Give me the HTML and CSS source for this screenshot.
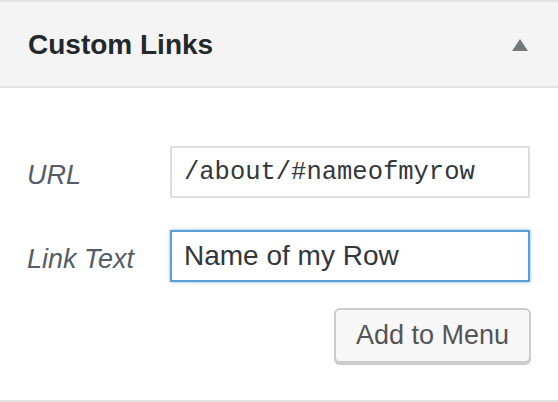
FILE: index.html
```html
<!DOCTYPE html>
<html>
<head>
<meta charset="utf-8">
<link rel="stylesheet" href="styles.css">
</head>
<body>
<div class="panel">
  <div class="panel-head">
    <h3 class="panel-title">Custom Links</h3>
    <svg class="toggle" width="16" height="12" viewBox="0 0 16 12"><polygon points="8,0 16,12 0,12" fill="#72777c"/></svg>
  </div>
  <div class="panel-body">
    <div class="field">
      <label class="field-label">URL</label>
      <div class="input input-url">/about/#nameofmyrow</div>
    </div>
    <div class="field">
      <label class="field-label">Link Text</label>
      <div class="input input-focus">Name of my Row</div>
    </div>
    <div class="actions">
      <button class="button">Add to Menu</button>
    </div>
  </div>
</div>
</body>
</html>
```

FILE: styles.css
```css
html, body {
  margin: 0;
  padding: 0;
  background: #fff;
}

.panel {
  width: 558px;
  height: 402px;
  box-sizing: border-box;
  border-top: 2px solid #e2e2e2;
  border-bottom: 2px solid #e2e2e2;
  font-family: "Liberation Sans", Arial, sans-serif;
  display: flex;
  flex-direction: column;
}

.panel-head {
  height: 84px;
  background: #f4f4f4;
  border-bottom: 2px solid #e2e2e2;
  display: flex;
  align-items: center;
  justify-content: space-between;
  padding: 0 30px 0 28px;
  flex-shrink: 0;
}

.panel-title {
  margin: 0;
  font-size: 28px;
  font-weight: bold;
  color: #23282d;
  line-height: 1;
  position: relative;
  top: 1px;
}

.toggle {
  display: block;
  position: relative;
  top: 1px;
}

.panel-body {
  padding: 58px 28px 0 27px;
  display: flex;
  flex-direction: column;
}

.field {
  display: grid;
  grid-template-columns: 143px 360px;
  align-items: center;
  margin-bottom: 32px;
}

.field-label {
  font-style: italic;
  font-size: 27px;
  color: #555d66;
  position: relative;
  top: 3px;
}

.input {
  box-sizing: border-box;
  height: 52px;
  border: 2px solid #dddddd;
  padding: 0 12px;
  display: flex;
  align-items: center;
  color: #32373c;
  background: #fff;
}

.input-url {
  font-family: "Liberation Mono", "Courier New", monospace;
  font-size: 25.5px;
}

.input-focus {
  border-color: #5b9dd9;
  box-shadow: 0 0 3px rgba(30, 140, 190, 0.6);
  font-size: 28px;
}

.field + .actions {
  margin-top: -6px;
}

.actions {
  display: flex;
  justify-content: flex-end;
}

.button {
  box-sizing: border-box;
  height: 55px;
  padding: 0 20px;
  background: #f7f7f7;
  border: 2px solid #cccccc;
  border-radius: 6px;
  box-shadow: 0 2px 0 #cccccc;
  font-family: "Liberation Sans", Arial, sans-serif;
  font-size: 27px;
  color: #555555;
  margin-right: -1px;
}
```
